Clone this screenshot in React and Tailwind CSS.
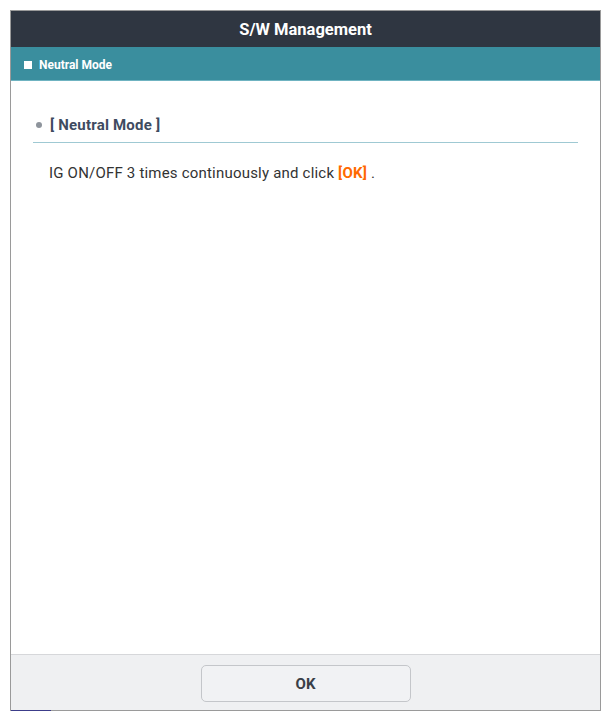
export default function App() {
  return (
    <div className="w-[611px] h-[721px] bg-white pt-[10px] pl-[10px]" style={{ fontFamily: 'Roboto, "Liberation Sans", sans-serif' }}>
      <div className="w-[591px] h-[701px] flex flex-col border-t border-l border-r border-[#9a9a9a]">
        <header className="h-[36px] flex items-center justify-center pt-[3px] bg-[#2f3641] text-white text-[16.5px] font-bold">
          S/W Management
        </header>
        <div className="h-[34px] flex items-center gap-[7px] pl-[13px] pt-[3px] bg-[#3a8e9e] border-b border-[#6fb3c1] text-white text-[12px] font-bold">
          <span className="w-[8px] h-[8px] bg-white" />
          <span>Neutral Mode</span>
        </div>

        <main className="flex-1 px-[22px] pt-[33px]">
          <div className="flex items-center gap-[8px] pl-[3px] pb-[5px] border-b border-[#9fc9d3]">
            <span className="w-[6px] h-[6px] rounded-full bg-[#8e949c]" />
            <span className="text-[15px] font-bold text-[#3e4b60] tracking-[0.2px]">[ Neutral Mode ]</span>
          </div>
          <p className="mt-[19px] pl-[16px] text-[15px] tracking-[0.2px] text-[#333333]">
            IG ON/OFF 3 times continuously and click <span className="font-bold text-[#ff6a00]">[OK]</span> .
          </p>
        </main>

        <footer className="h-[56px] flex justify-center pt-[10px] bg-[#eff0f2] border-t border-[#d6d7da]">
          <button className="w-[210px] h-[37px] pt-[2px] rounded-[5px] border border-[#c4c6ca] bg-[#f1f2f4] text-[15px] font-bold text-[#3a3f47]">
            OK
          </button>
        </footer>
        <div className="flex h-[1px]">
          <div className="w-[40px] bg-[#3c3d8a]" />
          <div className="flex-1 bg-[#9a9a9a]" />
        </div>
      </div>
    </div>
  )
}
